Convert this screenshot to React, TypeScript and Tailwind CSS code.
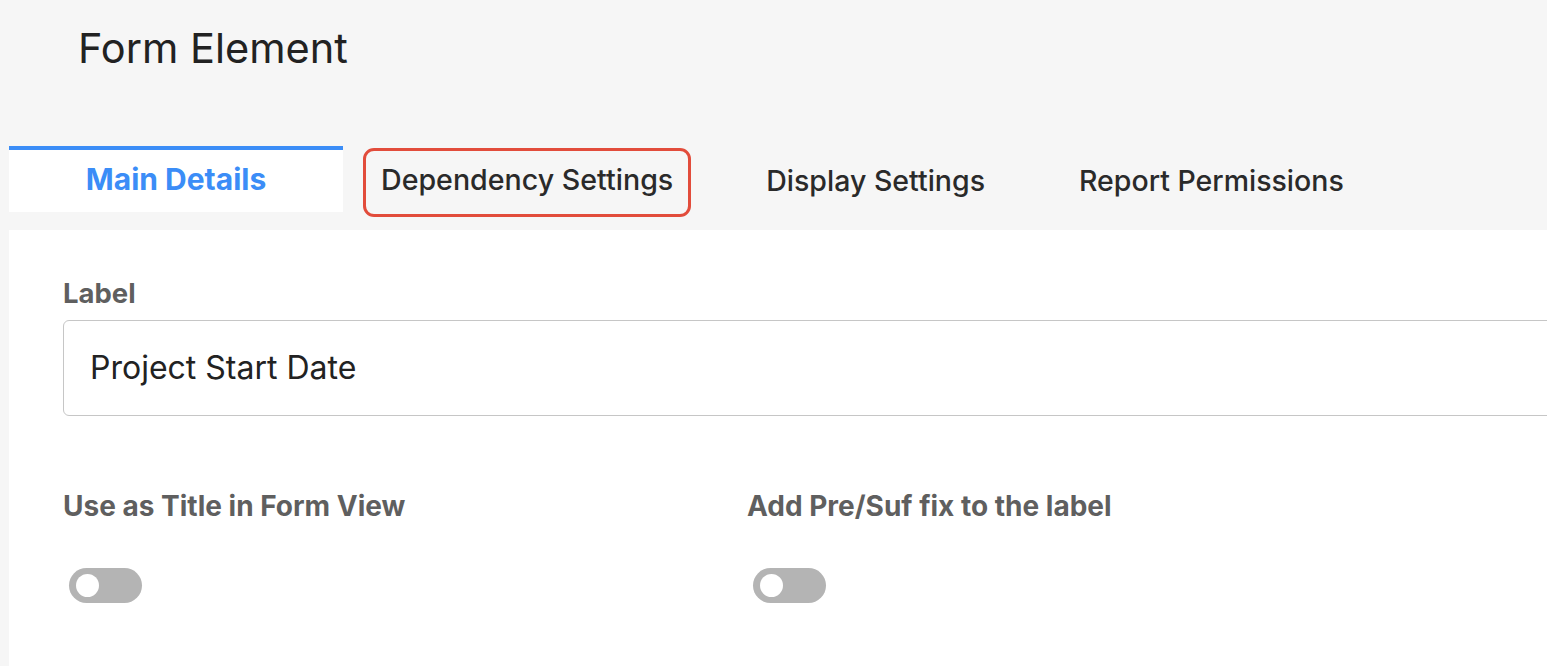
import React from "react";

function Toggle() {
  return (
    <div className="ml-[6px] flex h-[35px] w-[73px] items-center rounded-full bg-[#b4b4b4] pl-[7px]">
      <div className="h-[23px] w-[23px] rounded-full bg-white" />
    </div>
  );
}

export default function App() {
  return (
    <div
      className="h-[666px] w-[1547px] overflow-hidden bg-[#f6f6f6]"
      style={{ fontFamily: "Inter, 'Noto Sans', sans-serif" }}
    >
      <div className="pl-[78px] pt-[23px] text-[41.5px] leading-[1.21] font-normal text-[#222]">
        Form Element
      </div>

      <div className="mt-[73px] flex items-start pl-[9px]">
        <div className="flex h-[66px] w-[334px] items-center justify-center border-t-4 border-[#3b8df7] bg-white pb-[4px] text-[30px] leading-[1.21] font-bold text-[#3b8df7]">
          Main Details
        </div>
        <div className="ml-[20px] mt-[2px] flex h-[69px] items-center rounded-[11px] border-[3px] border-[#e24c3b] px-[15px] pb-[4px] text-[28.6px] leading-[1.21] font-medium text-[#2a2a2a]">
          Dependency Settings
        </div>
        <div className="ml-[75px] flex h-[66px] items-center pt-[4px] text-[28.5px] leading-[1.21] font-medium text-[#2a2a2a]">
          Display Settings
        </div>
        <div className="ml-[94px] flex h-[66px] items-center pt-[4px] text-[28.5px] leading-[1.21] font-medium text-[#2a2a2a]">
          Report Permissions
        </div>
      </div>

      <div className="ml-[9px] mt-[13px] h-[600px] w-[1600px] bg-white pl-[54px] pr-[54px] pt-[47px]">
        <div className="text-[27.5px] leading-[1.21] font-bold text-[#5f5f5f]">Label</div>
        <div className="mt-[10px] flex h-[96px] w-full items-center rounded-[6px] border-[1.5px] border-[#c6c6c6] pl-[26px] text-[32px] leading-[1.21] text-[#222]">
          Project Start Date
        </div>

        <div className="mt-[74px] flex">
          <div className="w-[684px]">
            <div className="text-[28px] leading-[1.21] font-bold text-[#5f5f5f]">
              Use as Title in Form View
            </div>
            <div className="mt-[44px]">
              <Toggle />
            </div>
          </div>
          <div>
            <div className="text-[28px] leading-[1.21] font-bold text-[#5f5f5f]">
              Add Pre/Suf fix to the label
            </div>
            <div className="mt-[44px]">
              <Toggle />
            </div>
          </div>
        </div>
      </div>
    </div>
  );
}
